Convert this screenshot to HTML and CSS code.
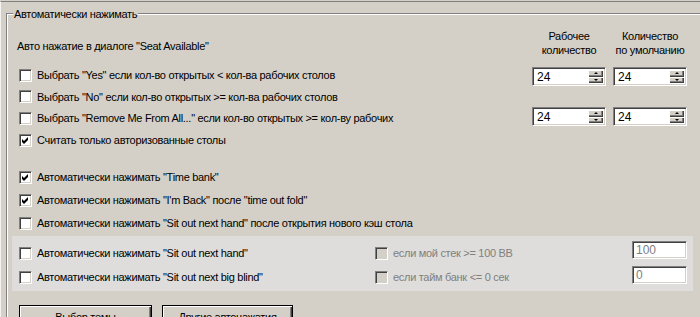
FILE: index.html
```html
<!DOCTYPE html>
<html lang="ru">
<head>
  <meta charset="UTF-8" />
  <title>Автоматически нажимать</title>
  <link rel="stylesheet" href="styles.css">
</head>
<body>
  <div class="window">
    <div class="group">
      <span class="legend">Автоматически нажимать</span>
      <div class="content">
        <div class="head">
          <div class="head-title">Авто нажатие в диалоге "Seat Available"</div>
          <div class="cols">
            <div class="col-title">Рабочее<br>количество</div>
            <div class="col-title">Количество<br>по умолчанию</div>
          </div>
        </div>

        <div class="row r1">
          <label class="check"><span class="box"></span>Выбрать "Yes" если кол-во открытых &lt; кол-ва рабочих столов</label>
          <div class="cols spins low">
            <div class="spin"><span class="val">24</span><span class="arrows"><span class="arr up"></span><span class="arr down"></span></span></div>
            <div class="spin"><span class="val">24</span><span class="arrows"><span class="arr up"></span><span class="arr down"></span></span></div>
          </div>
        </div>
        <div class="row r2">
          <label class="check"><span class="box"></span>Выбрать "No" если кол-во открытых &gt;= кол-ва рабочих столов</label>
        </div>
        <div class="row r3">
          <label class="check"><span class="box"></span>Выбрать "Remove Me From All..." если кол-во открытых &gt;= кол-ву рабочих</label>
          <div class="cols spins">
            <div class="spin"><span class="val">24</span><span class="arrows"><span class="arr up"></span><span class="arr down"></span></span></div>
            <div class="spin"><span class="val">24</span><span class="arrows"><span class="arr up"></span><span class="arr down"></span></span></div>
          </div>
        </div>
        <div class="row r4">
          <label class="check"><span class="box"><svg viewBox="0 0 9 9" width="9" height="9"><polygon points="1,3 3,5 7,1 7,4 3,8 1,6"/></svg></span>Считать только авторизованные столы</label>
        </div>

        <div class="row r5">
          <label class="check"><span class="box"><svg viewBox="0 0 9 9" width="9" height="9"><polygon points="1,3 3,5 7,1 7,4 3,8 1,6"/></svg></span>Автоматически нажимать "Time bank"</label>
        </div>
        <div class="row r6">
          <label class="check"><span class="box"><svg viewBox="0 0 9 9" width="9" height="9"><polygon points="1,3 3,5 7,1 7,4 3,8 1,6"/></svg></span>Автоматически нажимать "I'm Back" после "time out fold"</label>
        </div>
        <div class="row r7">
          <label class="check"><span class="box"></span>Автоматически нажимать "Sit out next hand" после открытия нового кэш стола</label>
        </div>

        <div class="panel">
          <div class="row">
            <label class="check"><span class="box"></span>Автоматически нажимать "Sit out next hand"</label>
            <label class="check sub disabled"><span class="box"></span>если мой стек &gt;= 100 BB</label>
            <div class="field">100</div>
          </div>
          <div class="row">
            <label class="check"><span class="box"></span>Автоматически нажимать "Sit out next big blind"</label>
            <label class="check sub disabled"><span class="box"></span>если тайм банк &lt;= 0 сек</label>
            <div class="field">0</div>
          </div>
        </div>

        <div class="buttons">
          <button class="btn theme">Выбор темы</button>
          <button class="btn other">Другие автонажатия</button>
        </div>
      </div>
    </div>
  </div>
</body>
</html>
```

FILE: styles.css
```css
html, body {
  margin: 0;
  height: 100%;
  overflow: hidden;
  background: #d4d0c8;
}
body {
  font-family: 'Liberation Sans', Arial, sans-serif;
  font-size: 11px;
  letter-spacing: -0.3px;
  color: #000;
}
.window {
  margin-top: 1px;
  height: 316px;
  overflow: hidden;
  border-top: 1px solid #808080;
  border-left: 1px solid #f4f3f0;
  box-sizing: border-box;
}
.group {
  position: relative;
  margin: 11px 0 0 5px;
  height: 400px;
  border-top: 1px solid #808080;
  border-left: 1px solid #808080;
  box-shadow: inset 1px 1px 0 #fff;
}
.legend {
  position: absolute;
  top: -7px;
  left: 6px;
  padding: 0 1px;
  line-height: 14px;
  background: #d4d0c8;
}
.content {
  padding-left: 5px;
  width: 681px;
}
.head {
  display: flex;
  justify-content: space-between;
  height: 50px;
  padding-right: 6px;
}
.head-title {
  padding: 25px 0 0 5px;
  line-height: 14px;
}
.cols {
  display: flex;
  gap: 7px;
}
.head .cols {
  padding-top: 15px;
}
.col-title {
  width: 74px;
  text-align: center;
  line-height: 14px;
}
.row {
  display: flex;
  align-items: center;
  height: 22px;
  padding: 0 6px 0 7px;
}
.r2 { height: 21px; }
.r5 { margin-top: 15px; }
.r6, .r7 { margin-top: 1px; }
.check {
  display: flex;
  align-items: center;
  gap: 5px;
  white-space: nowrap;
  flex: 1;
}
.box {
  width: 13px;
  height: 13px;
  box-sizing: border-box;
  padding: 2px;
  background: #fff;
  border-top: 1px solid #808080;
  border-left: 1px solid #808080;
  border-right: 1px solid #fff;
  border-bottom: 1px solid #fff;
  box-shadow: inset 1px 1px 0 #404040, inset -1px -1px 0 #d4d0c8;
  flex: none;
}
.box svg {
  display: block;
  margin: -1px 0 0 -1px;
  fill: #000;
}
.spins {
  align-self: flex-start;
}
.spins.low {
  margin-top: 3px;
}
.spin,
.field {
  box-sizing: border-box;
  background: #fff;
  border-top: 1px solid #808080;
  border-left: 1px solid #808080;
  border-right: 1px solid #fff;
  border-bottom: 1px solid #fff;
  box-shadow: inset 1px 1px 0 #404040, inset -1px -1px 0 #d4d0c8;
}
.spin {
  display: flex;
  width: 74px;
  height: 19px;
  padding: 2px;
}
.val {
  flex: 1;
  padding-left: 2px;
  font-size: 12px;
  line-height: 15px;
  letter-spacing: 0;
}
.arrows {
  display: flex;
  flex-direction: column;
  width: 15px;
}
.arr {
  flex: 1;
  display: flex;
  align-items: center;
  justify-content: center;
  background: #d4d0c8;
  box-shadow: inset 1px 1px 0 #fff, inset -1px -1px 0 #404040, inset -2px -2px 0 #808080;
}
.arr::after {
  content: '';
  border-left: 2px solid transparent;
  border-right: 2px solid transparent;
}
.arr.up::after {
  border-bottom: 2px solid #000;
}
.arr.down::after {
  border-top: 2px solid #000;
}
.panel {
  margin-top: 2px;
  padding: 6px 0 3px;
  display: flex;
  flex-direction: column;
  gap: 2px;
  background: #dedddb;
}
.panel .check {
  flex: none;
  width: 356px;
}
.panel .check.sub {
  width: 257px;
}
.disabled {
  color: #808080;
}
.disabled .box {
  background: #d4d0c8;
}
.field {
  align-self: flex-start;
  width: 55px;
  height: 18px;
  padding: 1px 0 0 3px;
  color: #808080;
  font-size: 12px;
  line-height: 15px;
  letter-spacing: 0;
}
.panel .row:first-child .field {
  margin-top: -1px;
}
.buttons {
  display: flex;
  gap: 10px;
  margin-top: 14px;
  padding-left: 7px;
}
.btn {
  height: 23px;
  padding: 0;
  font-family: inherit;
  font-size: 11px;
  letter-spacing: -0.3px;
  color: #000;
  background: #d4d0c8;
  border: 1px solid #000;
  box-shadow: inset 1px 1px 0 #fff, inset -1px -1px 0 #404040, inset -2px -2px 0 #808080;
}
.btn.theme { width: 133px; }
.btn.other { width: 131px; }
```
